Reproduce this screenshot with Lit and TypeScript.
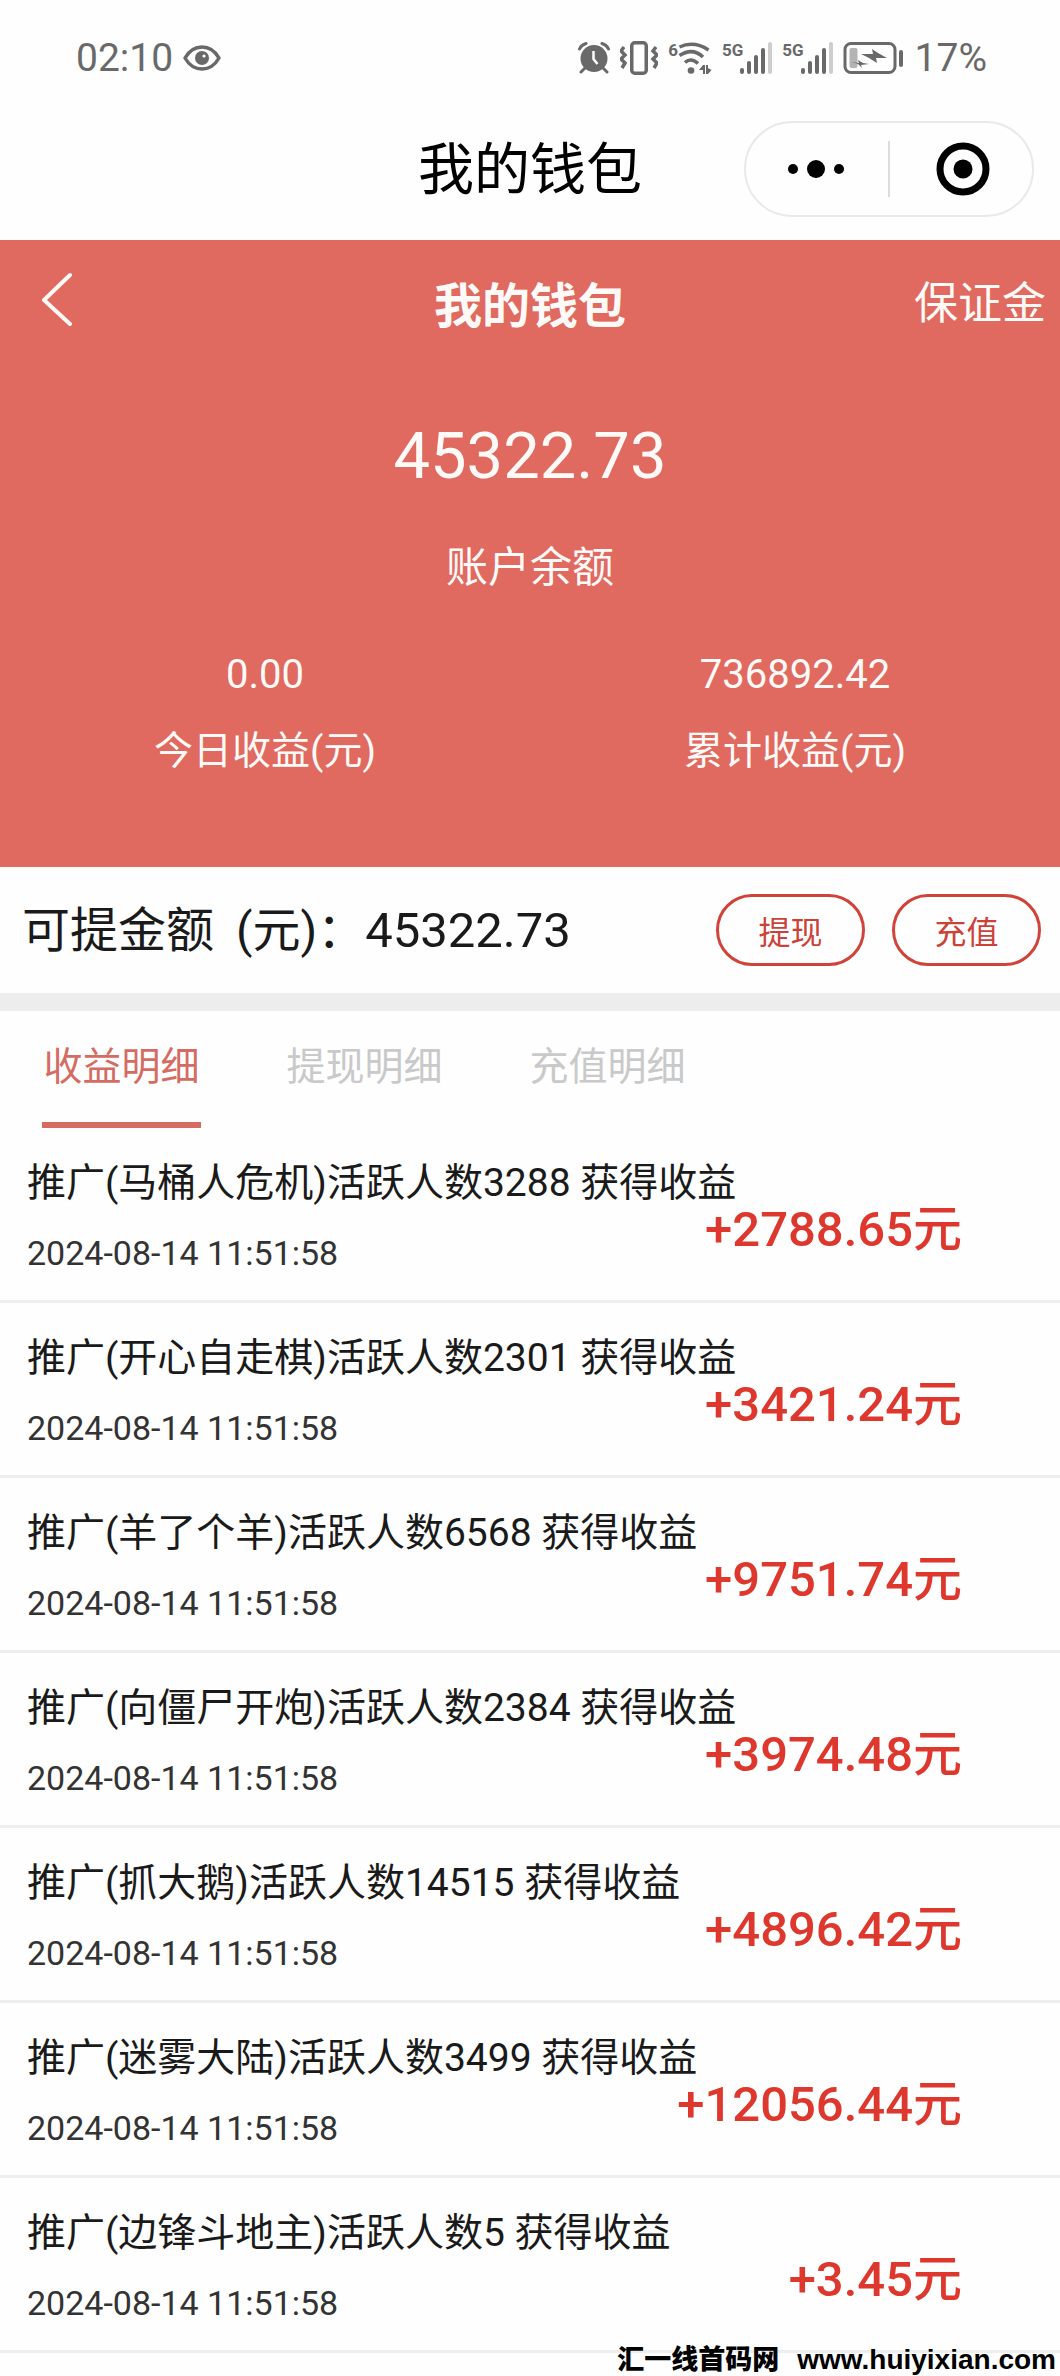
import { LitElement, html, css, svg } from "lit";
import { customElement, state } from "lit/decorators.js";
import { classMap } from "lit/directives/class-map.js";

interface Income {
  title: string;
  time: string;
  amount: string;
}

const TIME = "2024-08-14 11:51:58";

const INCOMES: Income[] = [
  { title: "推广(马桶人危机)活跃人数3288 获得收益", time: TIME, amount: "+2788.65元" },
  { title: "推广(开心自走棋)活跃人数2301 获得收益", time: TIME, amount: "+3421.24元" },
  { title: "推广(羊了个羊)活跃人数6568 获得收益", time: TIME, amount: "+9751.74元" },
  { title: "推广(向僵尸开炮)活跃人数2384 获得收益", time: TIME, amount: "+3974.48元" },
  { title: "推广(抓大鹅)活跃人数14515 获得收益", time: TIME, amount: "+4896.42元" },
  { title: "推广(迷雾大陆)活跃人数3499 获得收益", time: TIME, amount: "+12056.44元" },
  { title: "推广(边锋斗地主)活跃人数5 获得收益", time: TIME, amount: "+3.45元" },
];

const TABS = ["收益明细", "提现明细", "充值明细"];

@customElement("status-bar")
export class StatusBar extends LitElement {
  static styles = css`
    :host {
      display: block;
      color: #696969;
    }
    .bar {
      display: flex;
      align-items: center;
      justify-content: space-between;
      height: 116px;
      padding: 0 73px 0 76px;
      font-size: 39px;
      line-height: 48px;
    }
    .group {
      display: flex;
      align-items: center;
      gap: 10px;
    }
    .icon {
      display: block;
      flex: none;
    }
    .cell {
      display: flex;
      align-items: flex-start;
    }
    .mark {
      font-size: 17px;
      line-height: 16px;
      font-weight: 700;
    }
    .bars {
      margin-left: -3px;
    }
  `;

  private signal() {
    return html`<span class="cell">
      <span class="mark">5G</span>
      <svg class="icon bars" width="32" height="32" viewBox="0 0 32 32">
        <g fill="currentColor">
          <rect x="0" y="26" width="4" height="6" rx="2" />
          <rect x="7" y="19" width="4" height="13" rx="2" />
          <rect x="14" y="13" width="4" height="19" rx="2" />
          <rect x="21" y="6" width="4" height="26" rx="2" />
          <rect x="28" y="0" width="4" height="32" rx="2" opacity=".32" />
        </g>
      </svg>
    </span>`;
  }

  render() {
    const zig = (x: number) =>
      svg`<path d="M${x + 4} 6 L${x + 1} 10 L${x + 5} 14 L${x + 1} 18 L${x + 5} 22 L${x + 2} 27" />`;
    return html`<div class="bar">
      <div class="group">
        <span>02:10</span>
        <svg class="icon" width="38" height="26" viewBox="0 0 38 26">
          <path d="M2 13C6 6 12 2 19 2s13 4 17 11c-4 7-10 11-17 11S6 20 2 13Z" fill="none" stroke="currentColor" stroke-width="3.500" stroke-linejoin="round" />
          <circle cx="19" cy="13" r="7" fill="currentColor" />
          <circle cx="21" cy="11" r="1.600" fill="#fff" />
        </svg>
      </div>
      <div class="group">
        <svg class="icon" width="32" height="32" viewBox="0 0 32 32">
          <g fill="none" stroke="currentColor" stroke-width="3" stroke-linecap="round">
            <path d="M1.500 7A10 10 0 0 1 8 1.500M30.500 7A10 10 0 0 0 24 1.500M7 26l-4 4M25 26l4 4" />
          </g>
          <circle cx="16" cy="16.500" r="13.500" fill="currentColor" />
          <path d="M15.500 9v8l4 5" fill="none" stroke="#fff" stroke-width="2.500" />
        </svg>
        <svg class="icon" width="38" height="34" viewBox="0 0 38 34">
          <g fill="none" stroke="currentColor" stroke-width="3.500">
            <rect x="11.750" y="1.750" width="14.500" height="30.500" rx="3" />
            ${zig(0)} ${zig(32)}
          </g>
        </svg>
        <span class="cell">
          <span class="mark">6</span>
          <svg class="icon" width="34" height="32" viewBox="0 0 34 32">
            <g fill="none" stroke="currentColor" stroke-width="3.500">
              <path d="M1.500 5Q16 -1.500 30.500 8M1.500 13.500Q14.500 5 25 15M7 20.500Q13 15 20 21.500" />
            </g>
            <circle cx="13" cy="28.500" r="3.300" fill="currentColor" />
            <path d="M21 28l4-5h2v9h-2v-4ZM28 23h2v3l3.500 2L30 32h-2Z" fill="currentColor" />
          </svg>
        </span>
        ${this.signal()} ${this.signal()}
        <svg class="icon" width="62" height="32" viewBox="0 0 62 32">
          <rect x="2" y="1.500" width="50" height="29" rx="6" fill="none" stroke="currentColor" stroke-width="3" />
          <rect x="6.500" y="6" width="8" height="20" rx="2" fill="currentColor" opacity=".5" />
          <rect x="56" y="8" width="4" height="17" rx="2" fill="currentColor" />
          <path d="M18 12l12 0-1-5 6 4 9 5-11 0 1 5-8-5ZM9 20l7 1-1-3 5 3 6 1-8 1 1 3-4-4Z" fill="currentColor" />
        </svg>
        <span>17%</span>
      </div>
    </div>`;
  }
}

@customElement("income-row")
export class IncomeRow extends LitElement {
  static properties = { income: { attribute: false } };
  declare income: Income;

  static styles = css`
    :host {
      display: block;
      border-bottom: 3px solid #eeeeee;
    }
    .row {
      display: flex;
      align-items: flex-end;
      padding: 31px 98px 23px 27px;
      white-space: nowrap;
    }
    .detail {
      display: flex;
      flex: 1;
      flex-direction: column;
      gap: 22px;
      min-width: 0;
      line-height: 48px;
    }
    .title {
      font-size: 39px;
      color: #1a1a1a;
    }
    .time {
      font-size: 34px;
      color: #333333;
    }
    .amount {
      padding-bottom: 23px;
      font-size: 49px;
      line-height: 48px;
      font-weight: 500;
      color: #de372d;
    }
  `;

  render() {
    return html`<div class="row">
      <div class="detail">
        <span class="title">${this.income.title}</span>
        <time class="time">${this.income.time}</time>
      </div>
      <span class="amount">${this.income.amount}</span>
    </div>`;
  }
}

@customElement("app-root")
export class AppRoot extends LitElement {
  @state() private active = 0;

  static styles = css`
    :host {
      display: block;
      position: relative;
      min-height: 100vh;
      overflow: hidden;
      background: #fefefe;
      color: #1a1a1a;
      font-family: Roboto, "Noto Sans CJK SC", sans-serif;
    }
    h1,
    h2,
    p,
    ul {
      margin: 0;
      padding: 0;
    }
    button {
      margin: 0;
      padding: 0;
      border: 0;
      background: none;
      color: inherit;
      font: inherit;
      cursor: pointer;
    }
    svg {
      display: block;
    }
    .nav,
    .hero-bar {
      display: grid;
      grid-template-columns: 1fr auto 1fr;
    }
    .nav {
      align-items: center;
      padding: 5px 26px 23px;
      color: #000000;
    }
    .nav-title {
      grid-column: 2;
      padding-top: 2px;
      font-size: 56px;
      line-height: 64px;
      font-weight: 400;
    }
    .capsule {
      display: flex;
      align-items: center;
      justify-self: end;
      border: 2px solid #e9e9e9;
      border-radius: 48px;
    }
    .capsule-button {
      display: flex;
      align-items: center;
      justify-content: center;
      width: 142px;
      height: 92px;
    }
    .divider {
      width: 2px;
      height: 56px;
      background: #dcdcdc;
    }
    .hero {
      padding: 32px 0 91px;
      background: #e06a60;
      color: #fffaf8;
      text-align: center;
    }
    .hero-bar {
      align-items: start;
    }
    .back {
      justify-self: start;
      padding-left: 41px;
    }
    .hero-title {
      font-size: 48px;
      line-height: 70px;
      font-weight: 700;
    }
    .deposit {
      justify-self: end;
      padding-right: 14px;
      color: inherit;
      font-size: 44px;
      line-height: 64px;
      text-decoration: none;
    }
    .balance {
      padding-top: 74px;
      font-size: 65px;
      line-height: 80px;
    }
    .balance-label {
      padding-top: 42px;
      font-size: 42px;
      line-height: 60px;
    }
    .stats {
      display: grid;
      grid-template-columns: 1fr 1fr;
      padding-top: 52px;
      line-height: 50px;
    }
    .stat {
      display: flex;
      flex-direction: column;
      gap: 26px;
    }
    .stat-value {
      font-size: 40px;
    }
    .stat-label {
      font-size: 39px;
    }
    .withdraw {
      display: flex;
      align-items: center;
      justify-content: space-between;
      padding: 27px 19px 27px 22px;
      border-bottom: 18px solid #ededed;
    }
    .available {
      display: flex;
      align-items: center;
      padding-top: 2px;
      font-size: 48px;
      line-height: 64px;
    }
    .unit {
      padding-left: 22px;
    }
    .available-value {
      font-size: 49px;
    }
    .actions {
      display: flex;
      gap: 27px;
    }
    .action {
      width: 149px;
      height: 72px;
      border: 3px solid #cf433a;
      border-radius: 36px;
      color: #cb4239;
      font-size: 32px;
    }
    .tabs {
      display: flex;
      gap: 84px;
      padding: 0 42px;
    }
    .tab {
      width: 159px;
      padding: 28px 0 27px;
      border-bottom: 6px solid transparent;
      color: #c9c9c9;
      font-size: 39px;
      line-height: 56px;
      white-space: nowrap;
    }
    .tab.active {
      border-bottom-color: #d66c61;
      color: #d46c63;
    }
    .list {
      list-style: none;
    }
    .watermark {
      position: absolute;
      right: 4px;
      bottom: 0;
      display: flex;
      gap: 18px;
      color: #000000;
      font-size: 27px;
      line-height: 32px;
      font-weight: 900;
    }
    .site {
      font-family: "Liberation Sans", sans-serif;
      font-size: 28px;
      font-weight: 700;
    }
  `;

  render() {
    return html`
      <status-bar></status-bar>
      <header class="nav">
        <h1 class="nav-title">我的钱包</h1>
        <div class="capsule">
          <button class="capsule-button" aria-label="更多">
            <svg width="58" height="20" viewBox="0 0 58 20">
              <circle cx="5" cy="10" r="5" />
              <circle cx="28" cy="10" r="9" />
              <circle cx="51" cy="10" r="5" />
            </svg>
          </button>
          <span class="divider"></span>
          <button class="capsule-button" aria-label="关闭">
            <svg width="58" height="54" viewBox="0 0 58 54">
              <circle cx="31" cy="27" r="23" fill="none" stroke="#000" stroke-width="7" />
              <circle cx="31" cy="27" r="9.500" />
            </svg>
          </button>
        </div>
      </header>
      <section class="hero">
        <div class="hero-bar">
          <button class="back" aria-label="返回">
            <svg width="32" height="54" viewBox="0 0 32 54">
              <path d="M29 3L3 28L29 52" fill="none" stroke="currentColor" stroke-width="4" stroke-linecap="round" stroke-linejoin="round" />
            </svg>
          </button>
          <h2 class="hero-title">我的钱包</h2>
          <a class="deposit" href="#deposit">保证金</a>
        </div>
        <p class="balance">45322.73</p>
        <p class="balance-label">账户余额</p>
        <div class="stats">
          <div class="stat">
            <span class="stat-value">0.00</span>
            <span class="stat-label">今日收益(元)</span>
          </div>
          <div class="stat">
            <span class="stat-value">736892.42</span>
            <span class="stat-label">累计收益(元)</span>
          </div>
        </div>
      </section>
      <section class="withdraw">
        <div class="available">
          <span>可提金额</span>
          <span class="unit">(元)：</span>
          <span class="available-value">45322.73</span>
        </div>
        <div class="actions">
          <button class="action">提现</button>
          <button class="action">充值</button>
        </div>
      </section>
      <div class="tabs" role="tablist">
        ${TABS.map(
          (tab, i) => html`<button
            class=${classMap({ tab: true, active: i === this.active })}
            role="tab"
            aria-selected=${i === this.active ? "true" : "false"}
            @click=${() => (this.active = i)}
          >${tab}</button>`
        )}
      </div>
      <ul class="list">
        ${INCOMES.map((income) => html`<li><income-row .income=${income}></income-row></li>`)}
      </ul>
      <div class="watermark">
        <span>汇一线首码网</span>
        <span class="site">www.huiyixian.com</span>
      </div>
    `;
  }
}
